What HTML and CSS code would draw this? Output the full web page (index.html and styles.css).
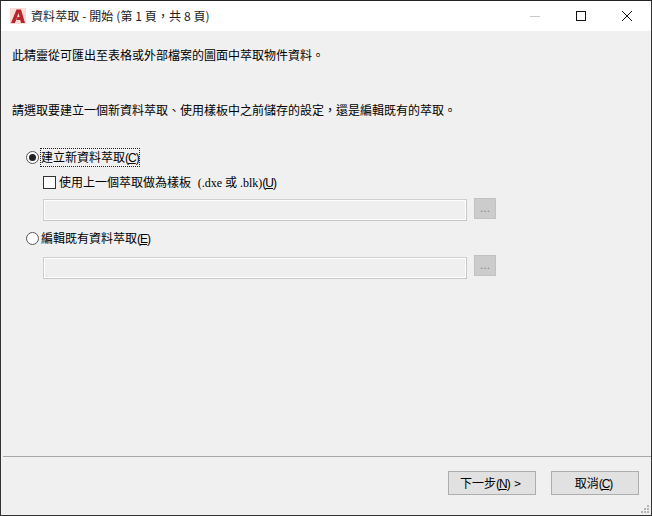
FILE: index.html
```html
<!DOCTYPE html>
<html lang="zh-TW">
<head>
<meta charset="UTF-8">
<title>資料萃取 - 開始 (第 1 頁，共 8 頁)</title>
<link rel="stylesheet" href="styles.css">
</head>
<body>
<div class="window">
  <div class="titlebar">
    <svg class="logo" width="16" height="16" viewBox="0 0 16 16">
      <rect width="16" height="16" fill="#f8dcd6"/>
      <path d="M1 15 L6.5 1.5 H11 L15 15 H11 L10.3 12 H6.4 L7.4 9 H9.6 L8.5 5 L5 15 Z" fill="#b8252e"/>
    </svg>
    <span class="title">資料萃取 - 開始 (第 1 頁，共 8 頁)</span>
    <div class="winbtns">
      <svg width="46" height="30" viewBox="0 0 46 30"><path d="M18 15.5 H28" stroke="#c8c8c8"/></svg>
      <svg width="46" height="30" viewBox="0 0 46 30"><rect x="18.5" y="10.5" width="9" height="9" fill="none" stroke="#111"/></svg>
      <svg width="46" height="30" viewBox="0 0 46 30"><path d="M18 10 L28 20 M28 10 L18 20" stroke="#111" fill="none"/></svg>
    </div>
  </div>
  <div class="content">
    <p class="intro">此精靈從可匯出至表格或外部檔案的圖面中萃取物件資料。</p>
    <p class="prompt">請選取要建立一個新資料萃取、使用樣板中之前儲存的設定，還是編輯既有的萃取。</p>

    <div class="options">
      <div class="radio-row">
        <span class="radio checked"></span>
        <span class="focused">建立新資料萃取<span class="key">(<u>C</u>)</span></span>
      </div>
      <div class="check-row">
        <span class="checkbox"></span>
        <span>使用上一個萃取做為樣板 <span class="ext">(.dxe 或 .blk)</span><span class="key">(<u>U</u>)</span></span>
      </div>
      <div class="file-row">
        <div class="field"></div>
        <div class="browse">...</div>
      </div>
      <div class="radio-row second">
        <span class="radio"></span>
        <span>編輯既有資料萃取<span class="key">(<u>E</u>)</span></span>
      </div>
      <div class="file-row last">
        <div class="field"></div>
        <div class="browse">...</div>
      </div>
    </div>
  </div>
  <div class="footer">
    <button class="btn">下一步<span class="key">(<u>N</u>)</span> &gt;</button>
    <button class="btn">取消<span class="key">(<u>C</u>)</span></button>
    <svg class="grip" width="10" height="10" viewBox="0 0 10 10" fill="#b4b4b4">
      <rect x="7" y="1" width="2" height="2"/>
      <rect x="4" y="4" width="2" height="2"/><rect x="7" y="4" width="2" height="2"/>
      <rect x="1" y="7" width="2" height="2"/><rect x="4" y="7" width="2" height="2"/><rect x="7" y="7" width="2" height="2"/>
    </svg>
  </div>
</div>
</body>
</html>
```

FILE: styles.css
```css
*{box-sizing:border-box;margin:0;padding:0}
html,body{height:100%}
body{
  font-family:"Noto Sans CJK TC","Liberation Sans",sans-serif;
  font-size:12px;
  line-height:16px;
  color:#000;
  background:#f0f0f0;
}
.window{
  height:516px;
  display:flex;
  flex-direction:column;
  border:1px solid #333;
  border-top-color:#222;
  background:#f0f0f0;
}

/* title bar */
.titlebar{
  height:30px;
  flex:none;
  display:flex;
  align-items:center;
  background:#fff;
  padding-left:9px;
}
.logo{flex:none;margin-right:5px}
.title{flex:1;color:#222;letter-spacing:.1px}
.winbtns{display:flex;margin-right:1px}
.winbtns svg{display:block}

/* main */
.content{flex:1;padding:16px 11px 0}
.intro{height:16px}
.prompt{margin-top:39px;height:16px}
.options{margin-top:29px;padding-left:14px}
.radio-row{display:flex;align-items:center;height:20px;gap:2px}
.radio-row.second{margin-top:7px}
.radio{
  width:13px;height:13px;
  flex:none;
  border:1px solid #555;
  border-radius:50%;
  background:#fff;
  position:relative;
}
.radio.checked::after{
  content:"";
  position:absolute;
  left:2px;top:2px;
  width:7px;height:7px;
  border-radius:50%;
  background:#222;
}
.focused{outline:1px dotted #222}
.key{font-family:"Liberation Sans",sans-serif;letter-spacing:-1px}
.ext{font-family:"Liberation Serif",serif;margin-left:4px}
.check-row{display:flex;align-items:center;height:16px;margin:7px 0 0 17px;gap:3px}
.checkbox{
  width:13px;height:13px;
  flex:none;
  border:1px solid #333;
  background:#fff;
}
.file-row{display:flex;align-items:flex-start;gap:7px;margin:9px 0 0 17px}
.file-row.last{margin-top:9px}
.field{
  width:424px;height:22px;
  border:1px solid #cfcfcf;
  border-right-color:#c8c8c8;
  border-bottom-color:#c8c8c8;
  box-shadow:inset 0 0 0 1px #fff;
  background:#efefef;
}
.browse{
  width:22px;height:21px;
  margin-top:-1px;
  border:1px solid #c2c2c2;
  background:#cccccc;
  color:#8a8a8a;
  font-size:12px;
  line-height:18px;
  text-align:center;
  font-family:"Liberation Sans",sans-serif;
}
.file-row.last .browse{margin-top:-2px}

/* footer */
.footer{
  position:relative;
  height:59px;
  flex:none;
  margin:0 0 0 2px;
  border-top:1px solid #a8a8a8;
  display:flex;
  justify-content:flex-end;
  gap:15px;
  padding:14px 12px 0 0;
}
.btn{
  width:88px;height:24px;
  padding-right:3px;
  border:1px solid #adadad;
  background:#e1e1e1;
  font:inherit;
  word-spacing:2px;
  color:#000;
}
.grip{position:absolute;right:1px;bottom:1px}
```
